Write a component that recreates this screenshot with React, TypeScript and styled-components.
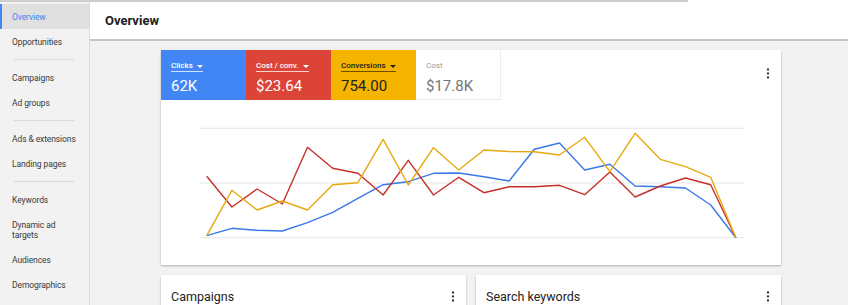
import styled, { createGlobalStyle } from "styled-components";

const GlobalStyle = createGlobalStyle`
  html, body {
    margin: 0;
    padding: 0;
    background: #f2f2f2;
  }
  body {
    font-family: Roboto, "Liberation Sans", Arial, sans-serif;
    color: #333;
  }
  * {
    box-sizing: border-box;
  }
`;

const Page = styled.div`
  position: relative;
  display: flex;
  height: 305px;
  overflow: hidden;
  background: #f2f2f2;
`;

// thin grey rule laid over the top edge of the window
const TopRule = styled.div`
  position: absolute;
  top: 0;
  left: 0;
  width: 688px;
  height: 2px;
  background: #cdcdcd;
  z-index: 2;
`;

const Sidebar = styled.nav`
  width: 90px;
  flex-shrink: 0;
  padding-top: 4px;
  background: #f2f2f2;
  border-right: 1px solid #dcdcdc;
`;

const NavItem = styled.div<{ $active?: boolean }>`
  display: flex;
  align-items: center;
  min-height: 25px;
  padding: 0 6px 0 10px;
  border-left: 2px solid ${(p) => (p.$active ? "#4285f4" : "transparent")};
  background: ${(p) => (p.$active ? "#e0e0e0" : "transparent")};
  color: ${(p) => (p.$active ? "#4285f4" : "#3a3a3a")};
  font-size: 8.5px;
  line-height: 10px;
  letter-spacing: -0.1px;

  &.tall {
    min-height: 35px;
  }
`;

const NavDivider = styled.div`
  height: 11px;
  display: flex;
  align-items: center;
  padding: 0 15px 0 14px;

  &::after {
    content: "";
    flex: 1;
    height: 1px;
    background: #dadada;
  }
`;

const Main = styled.main`
  flex: 1;
  min-width: 0;
  display: flex;
  flex-direction: column;
`;

const Header = styled.header`
  height: 41px;
  flex-shrink: 0;
  display: flex;
  align-items: center;
  padding: 1px 0 0 15px;
  background: #fff;
  border-bottom: 2px solid #c4c4c4;
`;

const Title = styled.h1`
  margin: 0;
  font-size: 13px;
  font-weight: 700;
  color: #202020;
`;

const Content = styled.div`
  display: flex;
  flex-direction: column;
  gap: 10px;
  width: 620px;
  margin: 9px 0 0 71px;
`;

const Card = styled.section`
  background: #fff;
  box-shadow: 0 1px 2px rgba(0, 0, 0, 0.28);
`;

const ChartCard = styled(Card)`
  height: 215px;
  display: flex;
  flex-direction: column;
`;

const TileRow = styled.div`
  display: flex;
  height: 50px;
  flex-shrink: 0;
`;

const Tile = styled.div<{ $bg: string; $fg: string; $line: string; $plain?: boolean }>`
  width: 85px;
  display: flex;
  flex-direction: column;
  align-items: flex-start;
  padding: 11px 10px 0;
  background: ${(p) => p.$bg};
  color: ${(p) => p.$fg};
  border-right: ${(p) => (p.$plain ? "1px solid #ececec" : "none")};
  border-bottom: ${(p) => (p.$plain ? "1px solid #ececec" : "none")};
`;

const TileLabel = styled.div<{ $line: string; $muted?: boolean }>`
  display: flex;
  align-items: center;
  gap: 4px;
  height: 11px;
  font-size: 8px;
  line-height: 10px;
  font-weight: ${(p) => (p.$muted ? 400 : 500)};
  color: ${(p) => (p.$muted ? "#9a9a9a" : "inherit")};
  border-bottom: 1px solid ${(p) => p.$line};
`;

const TileValue = styled.div`
  margin-top: 5px;
  font-size: 15px;
  line-height: 18px;
`;

const Caret = styled.span`
  width: 0;
  height: 0;
  border-left: 3px solid transparent;
  border-right: 3px solid transparent;
  border-top: 3.5px solid currentColor;
`;

const Kebab = styled.button<{ $top?: number }>`
  margin: ${(p) => p.$top ?? 0}px 11px 0 auto;
  padding: 0;
  width: 4px;
  height: 11px;
  border: none;
  background: none;
  display: flex;
  align-self: ${(p) => (p.$top === undefined ? "center" : "flex-start")};
`;

const ChartSvg = styled.svg`
  display: block;
  width: 620px;
  height: 165px;
`;

const BottomRow = styled.div`
  display: grid;
  grid-template-columns: 305px 305px;
  gap: 10px;
`;

const CardHead = styled.div`
  height: 43px;
  display: flex;
  align-items: center;
  padding: 0 0 0 10px;
  font-size: 12.5px;
  color: #222;
`;

const KebabIcon = () => (
  <svg width="4" height="11" viewBox="0 0 4 11">
    <circle cx="2" cy="1.5" r="1.15" fill="#333" />
    <circle cx="2" cy="5.5" r="1.15" fill="#333" />
    <circle cx="2" cy="9.5" r="1.15" fill="#333" />
  </svg>
);

const blue = [235.7, 228.3, 230.3, 231, 222.7, 212.3, 198.3, 184.7, 181.7, 173.3, 173, 176.7, 181, 149.3, 143, 170, 164.3, 186, 186.7, 188, 205, 237.7];
const red = [176.3, 207, 189, 204, 147.3, 168.3, 173.3, 195, 160.3, 195, 177.3, 192.7, 186.7, 186.7, 185.3, 194.7, 172, 197, 186, 178, 184.7, 237.7];
const yellow = [235.7, 190.3, 210, 201, 210, 184.7, 182.7, 139.3, 185, 147.7, 170, 150, 151.5, 151.7, 155, 137.3, 171.7, 133.3, 159.3, 166.7, 177.3, 237.7];

// page coords -> card-local coords
const toPoints = (ys: number[]) =>
  ys.map((y, i) => `${(206.7 + 25.2 * i - 161).toFixed(1)},${(y - 100).toFixed(1)}`).join(" ");

const series = [
  { ys: blue, color: "#3b78e7" },
  { ys: red, color: "#c5302a" },
  { ys: yellow, color: "#e8a910" },
];

const tiles = [
  { label: "Clicks", value: "62K", bg: "#4285f4", fg: "#fff", line: "rgba(255,255,255,0.75)" },
  { label: "Cost / conv.", value: "$23.64", bg: "#db4437", fg: "#fff", line: "rgba(255,255,255,0.75)" },
  { label: "Conversions", value: "754.00", bg: "#f4b400", fg: "#222", line: "rgba(0,0,0,0.55)" },
];

const navGroups = [
  ["Overview", "Opportunities"],
  ["Campaigns", "Ad groups"],
  ["Ads & extensions", "Landing pages"],
  ["Keywords", "Dynamic ad\ntargets", "Audiences", "Demographics"],
];

export default function App() {
  return (
    <>
      <GlobalStyle />
      <Page>
        <TopRule />
        <Sidebar>
          {navGroups.map((group, gi) => (
            <div key={gi}>
              {gi > 0 && <NavDivider />}
              {group.map((item) => {
                const lines = item.split("\n");
                return (
                  <NavItem
                    key={item}
                    $active={item === "Overview"}
                    className={lines.length > 1 ? "tall" : undefined}
                  >
                    <span>
                      {lines.map((l, li) => (
                        <span key={li}>
                          {li > 0 && <br />}
                          {l}
                        </span>
                      ))}
                    </span>
                  </NavItem>
                );
              })}
            </div>
          ))}
        </Sidebar>

        <Main>
          <Header>
            <Title>Overview</Title>
          </Header>

          <Content>
            <ChartCard>
              <TileRow>
                {tiles.map((t) => (
                  <Tile key={t.label} $bg={t.bg} $fg={t.fg} $line={t.line}>
                    <TileLabel $line={t.line}>
                      {t.label}
                      <Caret />
                    </TileLabel>
                    <TileValue>{t.value}</TileValue>
                  </Tile>
                ))}
                <Tile $bg="#fff" $fg="#757575" $line="transparent" $plain>
                  <TileLabel $line="transparent" $muted>
                    Cost
                  </TileLabel>
                  <TileValue>$17.8K</TileValue>
                </Tile>
                <Kebab $top={18} aria-label="More">
                  <KebabIcon />
                </Kebab>
              </TileRow>

              <ChartSvg viewBox="0 0 620 165">
                {[28.3, 83, 137.7].map((y) => (
                  <line key={y} x1="38" x2="583" y1={y} y2={y} stroke="#e6e6e6" strokeWidth="1" />
                ))}
                {series.map((s) => (
                  <polyline
                    key={s.color}
                    points={toPoints(s.ys)}
                    fill="none"
                    stroke={s.color}
                    strokeWidth="1.4"
                    strokeLinejoin="round"
                  />
                ))}
              </ChartSvg>
            </ChartCard>

            <BottomRow>
              <Card>
                <CardHead>
                  Campaigns
                  <Kebab aria-label="More">
                    <KebabIcon />
                  </Kebab>
                </CardHead>
              </Card>
              <Card>
                <CardHead>
                  Search keywords
                  <Kebab aria-label="More">
                    <KebabIcon />
                  </Kebab>
                </CardHead>
              </Card>
            </BottomRow>
          </Content>
        </Main>
      </Page>
    </>
  );
}
